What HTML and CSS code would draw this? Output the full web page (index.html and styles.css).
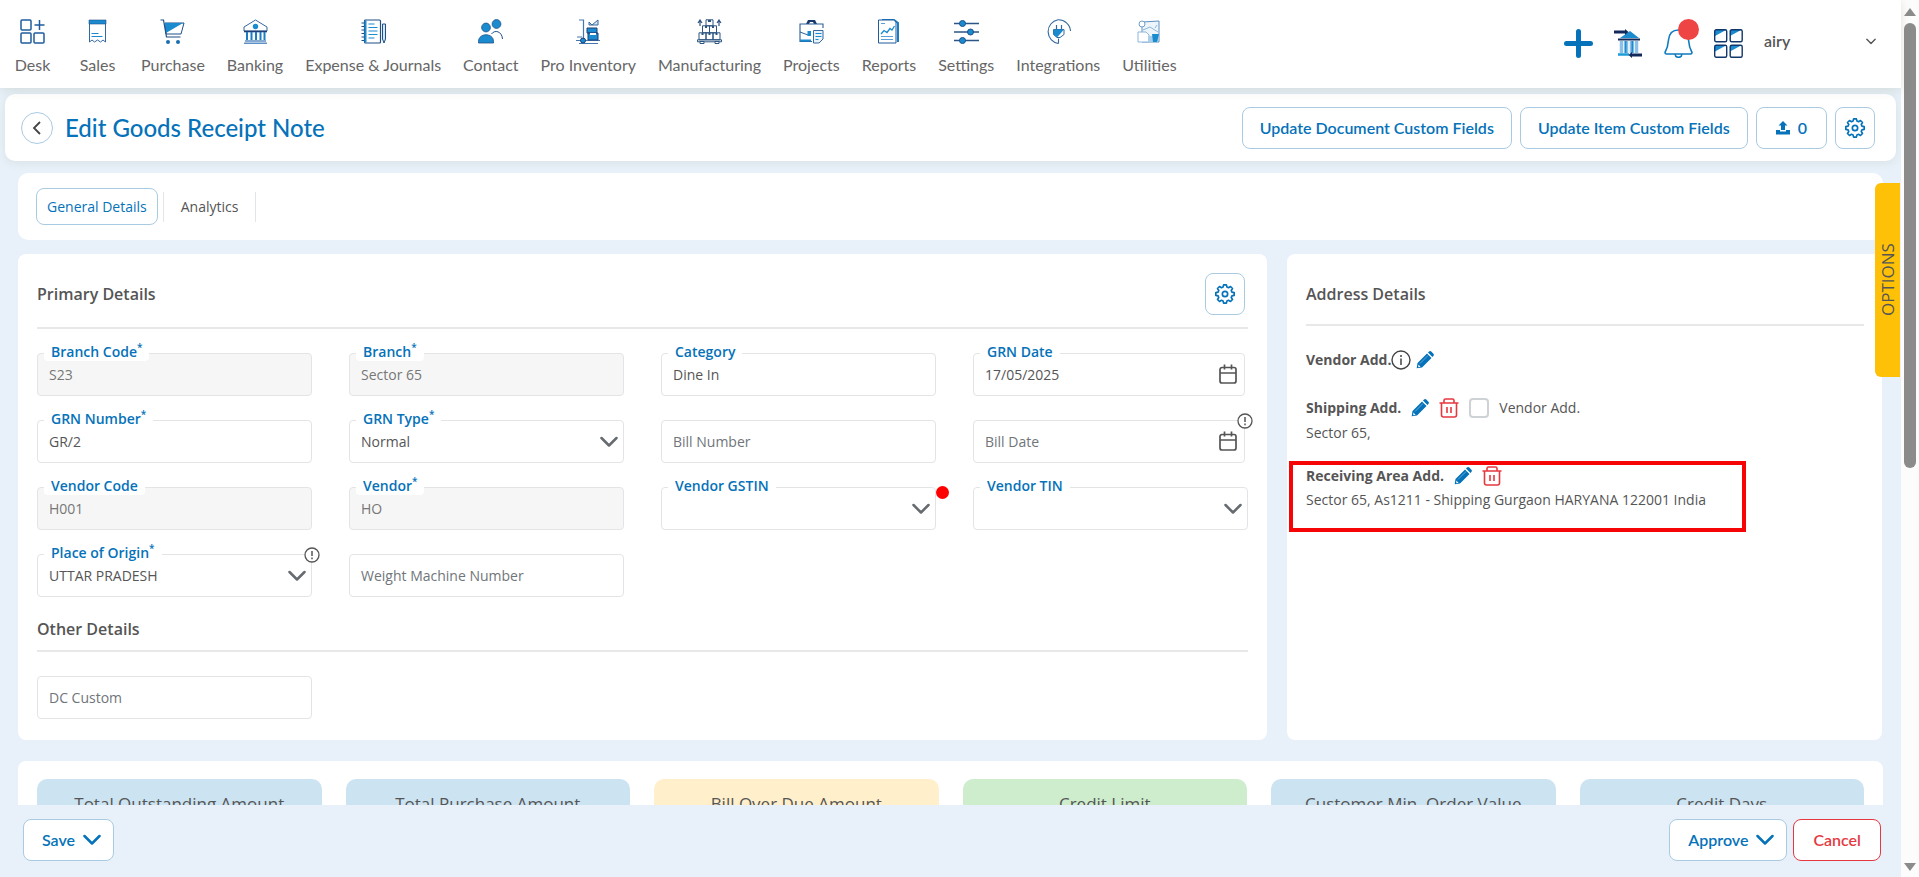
FILE: index.html
```
<!DOCTYPE html>
<html lang="en">
<head>
    <meta charset="utf-8">
    <title>Edit Goods Receipt Note</title>
    <link rel="stylesheet" href="styles.css">
</head>
<body>
<!-- shared icons -->
<svg class="defs" aria-hidden="true">
    <symbol id="gear" viewBox="0 0 24 24"><path d="M10.3 2.6h3.4l.6 2.7 1.9.8 2.4-1.5 2.4 2.4-1.5 2.4.8 1.9 2.7.6v3.4l-2.7.6-.8 1.9 1.5 2.4-2.4 2.4-2.4-1.5-1.9.8-.6 2.7h-3.4l-.6-2.7-1.9-.8-2.4 1.5L3 20.2l1.500-2.400-.8-1.900-2.700-.6v-3.400l2.700-.6.8-1.900L3 7l2.400-2.400 2.400 1.500 1.900-.8z" transform="translate(0 -1.600)" fill="none" stroke="currentColor" stroke-width="2" stroke-linejoin="round"/><circle cx="12" cy="12" r="3.200" fill="none" stroke="currentColor" stroke-width="2"/></symbol>
    <symbol id="chevron" viewBox="0 0 18 12"><path d="M1.500 2l7.500 7.500L16.500 2" fill="none" stroke="currentColor" stroke-width="2.500" stroke-linecap="round" stroke-linejoin="round"/></symbol>
    <symbol id="calendar" viewBox="0 0 18 20"><path d="M3 3.500h12a2 2 0 0 1 2 2V17a2 2 0 0 1-2 2H3a2 2 0 0 1-2-2V5.500a2 2 0 0 1 2-2zM1 9h16M5.500 0.500v5M12.500 0.500v5" fill="none" stroke="currentColor" stroke-width="1.700"/></symbol>
    <symbol id="alert" viewBox="0 0 16 16"><circle cx="8" cy="8" r="7" fill="#fff" stroke="currentColor" stroke-width="1.300"/><path d="M8 4v5M8 10.500v1.700" stroke="currentColor" stroke-width="1.500"/></symbol>
    <symbol id="pencil" viewBox="0 0 18 18"><path d="M1.500 12L11 2.500 15.500 7 6 16.500l-5.300.8zM12 1.600l1-1c.7-.7 1.600-.7 2.300 0l2.100 2.100c.7.7.7 1.600 0 2.300l-1 1z" fill="#0572b9"/><path d="M4 12.500l8-8" stroke="#5fa8d8" stroke-width="1"/><path d="M2.300 13.500l2.300 2.300-2.300.5z" fill="#fff"/></symbol>
    <symbol id="trash" viewBox="0 0 20 20"><path d="M.5 5h19M5 5V2.500A1.500 1.500 0 0 1 6.500 1h7A1.500 1.500 0 0 1 15 2.500V5M2.500 5v12A2 2 0 0 0 4.500 19h11a2 2 0 0 0 2-2V5M8 9v6M12 9v6" fill="none" stroke="#e5393f" stroke-width="1.600"/></symbol>
</svg>

<div class="window">
    <div class="page">
        <header class="topbar">
            <nav class="menu">
                <a href="#" class="menu-item"><svg viewBox="0 0 25 25"><g fill="none" stroke="#1f5c9c" stroke-width="1.500"><rect x="1" y="1" width="10" height="10" rx="1"/><rect x="1" y="14" width="10" height="10" rx="1"/><rect x="14" y="14" width="10" height="10" rx="1"/><path d="M19.500 1v10M14.500 6h10"/></g></svg>Desk</a>
                <a href="#" class="menu-item"><svg viewBox="0 0 25 25"><path d="M4.500 5V23l2.500-2 2.500 2 3-2 3 2 2.500-2 2.500 2V5" fill="#fff" stroke="#33699f" stroke-width="1"/><path d="M4 1h17v4H4z" fill="#1b8bd0" stroke="#1f4f86" stroke-width=".6"/><path d="M6.500 14.500h7M6.500 17.500h11" stroke="#1b8bd0"/></svg>Sales</a>
                <a href="#" class="menu-item"><svg viewBox="0 0 25 25"><path d="M5 4h19l-3 11H6z" fill="#fff" stroke="#1f4f86"/><path d="M5 4h18L6 14z" fill="#1b8bd0"/><path d="M.5 1h3l3 17h14" fill="none" stroke="#1f4f86" stroke-width="1.200"/><circle cx="8" cy="23" r="2" fill="#1b6eb0"/><circle cx="18" cy="23" r="2" fill="#1b6eb0"/></svg>Purchase</a>
                <a href="#" class="menu-item"><svg viewBox="0 0 25 25"><path d="M1 12V8L12.500 1 24 8v4z" fill="#fff" stroke="#33699f"/><path d="M1 12.500h23" stroke="#1f3f76" stroke-width="1.600"/><circle cx="12.500" cy="7.500" r="2.700" fill="#1b8bd0"/><path d="M4 13v8M8.500 13v8M13 13v8M17.500 13v8M21.500 13v8" stroke="#1b7cc4" stroke-width="2"/><path d="M2 22h21M1 24.300h23" stroke="#5d90c4" stroke-width="1.500"/></svg>Banking</a>
                <a href="#" class="menu-item"><svg viewBox="0 0 25 25"><rect x="3.500" y="1" width="16" height="23" rx="1" fill="#fff" stroke="#1f4f86" stroke-width="1.200"/><path d="M.5 4H5M.5 7.500H5M.5 11H5M.5 14.500H5M.5 18H5M.5 21.500H5" stroke="#1f4f86"/><path d="M4.500 1.500v22" stroke="#1b8bd0" stroke-width="2"/><path d="M7.500 5h6M7.500 8.500h9M7.500 12h9M7.500 15.500h9M7.500 19h6" stroke="#1b8bd0" stroke-width="1.100"/><path d="M21.500 5h3v15l-1.500 4-1.500-4z" fill="#d5e6f4" stroke="#1f4f86"/></svg>Expense &amp; Journals</a>
                <a href="#" class="menu-item"><svg viewBox="0 0 25 25"><path d="M.5 24v-1.500c0-9 15-9 15 0V24z" fill="#1b8bd0" stroke="#1f4f86" stroke-width=".8"/><circle cx="8" cy="8.500" r="4.400" fill="#1b8bd0" stroke="#1f4f86" stroke-width=".8"/><circle cx="18.500" cy="5" r="4.400" fill="#1b8bd0" stroke="#1f4f86" stroke-width=".8"/><path d="M13.500 15c3-4.500 10.500-3 11 5" fill="none" stroke="#1f4f86"/></svg>Contact</a>
                <a href="#" class="menu-item"><svg viewBox="0 0 25 25"><path d="M3 1h4.500v19M1 18h5M0 21.500h5M3 24.500h19M7 21.500h17" fill="none" stroke="#4579ae" stroke-width="1.200"/><path d="M12 14h10v7H12zM11 9h10v5H11z" fill="#1b8bd0" stroke="#1f3f76"/><path d="M13 3l3 3 6-5v5h-9z" fill="#d5e6f4" stroke="#33699f"/><path d="M14 14h6v2h-6z" fill="#fff"/><circle cx="7" cy="21.500" r="2.500" fill="#1b8bd0" stroke="#1f3f76"/></svg>Pro Inventory</a>
                <a href="#" class="menu-item"><svg viewBox="0 0 25 25"><path d="M9 .8h7v6H9zM5.500 6.800h7v7h-7zM12.500 6.800h7v7h-7zM2 13.800h7v7H2zM9 13.800h7v7H9zM16 13.800h7v7h-7zM.5 20.800h24v2H.5z" fill="#fff" stroke="#2d5480"/><path d="M11 1h3v2h-3zM8 7h2v2H8zM15 7h2v2h-2zM4.500 14h2v2h-2zM11.500 14h2v2h-2zM18.500 14h2v2h-2z" fill="#2d5480"/><path d="M3 7V2M1 4l2-3 2 3M22 7V2M20 4l2-3 2 3" fill="none" stroke="#2d5480" stroke-width="1.200"/><path d="M3 22.500h4v2H3zM18 22.500h4v2h-4z" fill="#fff" stroke="#2d5480"/></svg>Manufacturing</a>
                <a href="#" class="menu-item"><svg viewBox="0 0 25 25"><path d="M7 5l2-4h7l2 4h-3l-1-2h-3l-1 2z" fill="#16386a"/><path d="M24 9V5H1v17.500h12" fill="none" stroke="#2d5f94" stroke-width="1.100"/><path d="M1 13l8 3" stroke="#2d5f94"/><path d="M1 20.500h11v2H1zM8.500 12H12v5H8.500z" fill="#1b8bd0"/><path d="M14.500 11.500H24V20l-4 4h-5.500z" fill="#eaf3fa" stroke="#33699f"/><path d="M16.500 14.500h6M16.500 17.500h6M16.500 20.500h3" stroke="#1b8bd0"/></svg>Projects</a>
                <a href="#" class="menu-item"><svg viewBox="0 0 25 25"><path d="M6 1h12l4 3v19" fill="none" stroke="#1b7cc4" stroke-width="2"/><path d="M2.500 1h15l2.500 2v21h-17.500z" fill="#fff" stroke="#1f5c9c"/><path d="M5 15l3-3.500 3 2 3-4 2 1.500 2.500-4" fill="none" stroke="#1b8bd0" stroke-width="1.300"/><path d="M5 17.500h12M5 20.500h12M5 4.500h4" stroke="#5d9fd4"/></svg>Reports</a>
                <a href="#" class="menu-item"><svg viewBox="0 0 25 25"><path d="M0 4.500h25M0 13h25M0 21.500h25" stroke="#2c5587" stroke-width="1.300"/><g fill="#1b8bd0" stroke="#1f4f86"><circle cx="8.500" cy="4.500" r="3"/><circle cx="16.500" cy="13" r="3"/><circle cx="8.500" cy="21.500" r="3"/></g></svg>Settings</a>
                <a href="#" class="menu-item"><svg viewBox="0 0 25 25"><path d="M12.500 24.500v-5M12.500 24.500A12 12 0 0 1 12 .8 12 12 0 0 1 24.500 12" fill="none" stroke="#33699f" stroke-width="1.100"/><path d="M10.500 6v5M15.500 6v5" stroke="#33699f" stroke-width="1.200"/><path d="M7.500 10.500h10.500v5l-4 3h-3L7.500 15.500z" fill="#fff" stroke="#33699f"/><path d="M7.500 10.500H18l-7 8-3.500-3z" fill="#1b8bd0"/></svg>Integrations</a>
                <a href="#" class="menu-item"><svg viewBox="0 0 25 25"><path d="M5 3l17-1v21H5z" fill="#edf4fa" stroke="#5d90c4"/><circle cx="5" cy="5" r="3" fill="#fff" stroke="#6f9fcb"/><path d="M6 11l7-3 8 5M20 6l-2 3" fill="none" stroke="#8db6dc"/><path d="M1 13h8l3 3v7H1z" fill="#fff" stroke="#8db6dc"/><path d="M11 17h10v6H11z" fill="#a7cfec"/><path d="M15 15h7l-2 8h-4z" fill="#1b8bd0"/></svg>Utilities</a>
            </nav>
            <div class="tools">
                <button class="tool" aria-label="Add"><svg viewBox="0 0 29 29"><path d="M14.500 2.500v24M2.500 14.500h24" stroke="#0572b9" stroke-width="5" stroke-linecap="round"/></svg></button>
                <button class="tool" aria-label="Bank"><svg viewBox="0 0 29 29"><path d="M16 2l9 7H6z" fill="#1b8bd0"/><path d="M4 10.500h22" stroke="#12295c" stroke-width="2"/><path d="M7.500 12v12M12.500 12v12M17.500 12v12M22.500 12v12" stroke="#8cc0e6" stroke-width="3.500"/><path d="M11.500 12v12M18.500 12v12" stroke="#1b8bd0" stroke-width="2"/><path d="M4 25.500h11" stroke="#1b9bd8" stroke-width="2.500"/><path d="M0 1.500h11V0l3.500 3-3.500 3V4.500H0zM28 24.500H18V23l-3.500 3 3.500 3v-1.500h10z" fill="#12295c"/></svg></button>
                <button class="tool bell" aria-label="Notifications"><svg viewBox="0 0 29 29"><path d="M14.500 1C8 1 5 5.500 4.500 11c-.3 4-1 8-3.500 12.500 0 1 .5 1.500 1.500 1.500h24c1 0 1.500-.5 1.500-1.500C25.500 19 24.800 15 24.500 11 24 5.500 21 1 14.500 1z" fill="none" stroke="#0e7bbf" stroke-width="1.600"/><path d="M11 25c.5 4.500 6.500 4.500 7 0" fill="none" stroke="#0e7bbf" stroke-width="1.600"/></svg><span class="badge"></span></button>
                <button class="tool" aria-label="Apps"><svg viewBox="0 0 29 29"><path d="M1 1h11L1 7zM16 1h11l-11 6zM1 16.500h11L1 22.500zM16 16.500h11l-11 6z" fill="#1b8bd0"/><g fill="none" stroke="#12376a" stroke-width="1.400"><rect x=".7" y=".7" width="12" height="12" rx="1.500"/><rect x="16.200" y=".7" width="12" height="12" rx="1.500"/><rect x=".7" y="16.200" width="12" height="12" rx="1.500"/><rect x="16.200" y="16.200" width="12" height="12" rx="1.500"/></g></svg></button>
                <button class="user">airy<svg viewBox="0 0 18 12"><use href="#chevron"/></svg></button>
            </div>
        </header>

        <main class="content">
            <section class="titlebar">
                <button class="back" aria-label="Back"><svg viewBox="0 0 10 16"><path d="M8 2L2 8l6 6" fill="none" stroke="#444" stroke-width="1.800"/></svg></button>
                <h1>Edit Goods Receipt Note</h1>
                <button class="btn">Update Document Custom Fields</button>
                <button class="btn">Update Item Custom Fields</button>
                <button class="btn upload"><svg viewBox="0 0 14 14"><path d="M7 0l4.500 4.500H9V9H5V4.500H2.500zM0 9h4v1.500h6V9h4v4.500H0z" fill="currentColor"/></svg>0</button>
                <button class="btn icon-btn" aria-label="Settings"><svg><use href="#gear"/></svg></button>
            </section>

            <section class="tabs">
                <button class="tab active">General Details</button>
                <button class="tab">Analytics</button>
            </section>

            <div class="columns">
                <section class="card primary">
                    <div class="card-head">
                        <h2>Primary Details</h2>
                        <button class="btn icon-btn" aria-label="Field settings"><svg><use href="#gear"/></svg></button>
                    </div>
                    <div class="fields">
                        <div class="field"><input id="branchCode" value="S23" disabled><label for="branchCode">Branch Code<sup>*</sup></label></div>
                        <div class="field"><input id="branch" value="Sector 65" disabled><label for="branch">Branch<sup>*</sup></label></div>
                        <div class="field"><input id="category" value="Dine In"><label for="category">Category</label></div>
                        <div class="field date"><input id="grnDate" value="17/05/2025"><label for="grnDate">GRN Date</label><svg class="cal"><use href="#calendar"/></svg></div>

                        <div class="field"><input id="grnNumber" value="GR/2"><label for="grnNumber">GRN Number<sup>*</sup></label></div>
                        <div class="field"><select id="grnType"><option>Normal</option></select><label for="grnType">GRN Type<sup>*</sup></label><svg class="arrow"><use href="#chevron"/></svg></div>
                        <div class="field"><input placeholder="Bill Number" aria-label="Bill Number"></div>
                        <div class="field date"><input placeholder="Bill Date" aria-label="Bill Date"><svg class="cal"><use href="#calendar"/></svg><svg class="alert"><use href="#alert"/></svg></div>

                        <div class="field"><input id="vendorCode" value="H001" disabled><label for="vendorCode">Vendor Code</label></div>
                        <div class="field"><input id="vendor" value="HO" disabled><label for="vendor">Vendor<sup>*</sup></label></div>
                        <div class="field"><select id="gstin"><option></option></select><label for="gstin">Vendor GSTIN</label><svg class="arrow"><use href="#chevron"/></svg><span class="dot"></span></div>
                        <div class="field"><select id="tin"><option></option></select><label for="tin">Vendor TIN</label><svg class="arrow"><use href="#chevron"/></svg></div>

                        <div class="field"><select id="origin"><option>UTTAR PRADESH</option></select><label for="origin">Place of Origin<sup>*</sup></label><svg class="arrow"><use href="#chevron"/></svg><svg class="alert"><use href="#alert"/></svg></div>
                        <div class="field"><input placeholder="Weight Machine Number" aria-label="Weight Machine Number"></div>
                    </div>
                    <h2 class="sub-head">Other Details</h2>
                    <div class="fields">
                        <div class="field"><input placeholder="DC Custom" aria-label="DC Custom"></div>
                    </div>
                </section>

                <section class="card address">
                    <h2>Address Details</h2>
                    <div class="addr">
                        <div class="addr-row tight"><b>Vendor Add.</b><svg class="info" viewBox="0 0 20 20"><circle cx="10" cy="10" r="9" fill="none" stroke="#444" stroke-width="1.400"/><path d="M10 5v2M10 8.500V15" stroke="#444" stroke-width="1.500"/></svg><button class="act" aria-label="Edit vendor address"><svg class="pencil"><use href="#pencil"/></svg></button></div>
                    </div>
                    <div class="addr">
                        <div class="addr-row"><b>Shipping Add.</b><button class="act" aria-label="Edit shipping address"><svg class="pencil"><use href="#pencil"/></svg></button><button class="act" aria-label="Delete shipping address"><svg class="trash"><use href="#trash"/></svg></button><input type="checkbox" id="sameVendor"><label for="sameVendor">Vendor Add.</label></div>
                        <p>Sector 65,</p>
                    </div>
                    <div class="addr marked">
                        <div class="addr-row"><b>Receiving Area Add.</b><button class="act" aria-label="Edit receiving address"><svg class="pencil"><use href="#pencil"/></svg></button><button class="act" aria-label="Delete receiving address"><svg class="trash"><use href="#trash"/></svg></button></div>
                        <p>Sector 65, As1211 - Shipping Gurgaon HARYANA 122001 India</p>
                    </div>
                </section>
            </div>

            <section class="card tiles">
                <div class="tile">Total Outstanding Amount</div>
                <div class="tile">Total Purchase Amount</div>
                <div class="tile yellow">Bill Over Due Amount</div>
                <div class="tile green">Credit Limit</div>
                <div class="tile">Customer Min. Order Value</div>
                <div class="tile">Credit Days</div>
            </section>
        </main>

        <footer class="actions">
            <button class="btn save">Save<svg><use href="#chevron"/></svg></button>
            <button class="btn approve">Approve<svg><use href="#chevron"/></svg></button>
            <button class="btn cancel">Cancel</button>
        </footer>

        <button class="options">OPTIONS</button>
    </div>

    <div class="scrollbar">
        <svg viewBox="0 0 12 8"><path d="M6 0l6 8H0z" fill="#8b8b8b"/></svg>
        <div class="track"><div class="thumb"></div></div>
        <svg viewBox="0 0 12 8"><path d="M6 8l6-8H0z" fill="#8b8b8b"/></svg>
    </div>
</div>
</body>
</html>
```
FILE: styles.css
```
* {
    box-sizing: border-box;
}
body {
    margin: 0;
    background: #e8f1f9;
    color: #555;
    font: 14px/20px "Open Sans", "Noto Sans", sans-serif;
}
button, input, select {
    font: inherit;
    color: inherit;
}
button {
    padding: 0;
    border: 0;
    background: none;
}
h1, h2, p {
    margin: 0;
}
svg {
    display: block;
    flex: none;
}
.defs {
    position: absolute;
    width: 0;
    height: 0;
}
.window {
    display: flex;
    height: 100vh;
    overflow: hidden;
}
.page {
    position: relative;
    flex: 1;
    min-width: 0;
    display: flex;
    flex-direction: column;
}

/* top menu */
.topbar {
    position: relative;
    z-index: 1;
    display: flex;
    justify-content: space-between;
    height: 88px;
    flex: none;
    background: #fff;
    box-shadow: 0 2px 10px rgba(110, 120, 90, 0.18);
    font-family: Lato, sans-serif;
}
.menu {
    display: flex;
    gap: 22px;
    padding: 19px 0 0 11px;
}
.menu-item {
    display: flex;
    flex-direction: column;
    align-items: center;
    gap: 11px;
    min-width: 43px;
    color: #666;
    font-size: 16px;
    text-decoration: none;
    white-space: nowrap;
}
.menu-item svg {
    width: 25px;
    height: 25px;
}
.tools {
    display: flex;
    align-items: flex-start;
    gap: 21px;
    padding: 29px 25px 0 0;
}
.tool {
    position: relative;
}
.tool svg {
    width: 29px;
    height: 29px;
}
.badge {
    position: absolute;
    top: -10px;
    right: -6px;
    width: 21px;
    height: 21px;
    border-radius: 50%;
    background: #ef4444;
}
.user {
    display: flex;
    justify-content: space-between;
    align-items: center;
    width: 112px;
    margin-top: 2px;
    font-size: 16px;
    font-weight: 600;
}
.user svg {
    width: 10px;
    height: 7px;
}

/* page title */
.content {
    flex: 1;
    min-height: 0;
    overflow: hidden;
    padding: 6px 18px 0;
}
.titlebar {
    display: flex;
    align-items: center;
    gap: 8px;
    height: 67px;
    margin: 0 -13px;
    padding: 0 21px 0 16px;
    border-radius: 10px;
    background: #fff;
    box-shadow: 0 2px 10px rgba(110, 120, 90, 0.12);
    font-family: Lato, sans-serif;
}
.back {
    display: flex;
    align-items: center;
    justify-content: center;
    width: 32px;
    height: 32px;
    border: 1px solid #a9cbe2;
    border-radius: 50%;
}
.back svg {
    width: 10px;
    height: 16px;
}
h1 {
    flex: 1;
    padding-left: 4px;
    color: #0572b9;
    font-size: 24px;
    line-height: 30px;
    font-weight: 500;
}
.btn {
    display: flex;
    align-items: center;
    justify-content: center;
    gap: 8px;
    height: 42px;
    padding: 0 17px;
    border: 1px solid #a9cbe2;
    border-radius: 8px;
    background: #fff;
    color: #0572b9;
    font-family: Lato, sans-serif;
    font-size: 16px;
    font-weight: 600;
}
.upload {
    padding: 0 19px;
}
.upload svg {
    width: 14px;
    height: 14px;
}
.icon-btn {
    width: 40px;
    padding: 0;
}
.icon-btn svg {
    width: 20px;
    height: 20px;
}

/* tabs */
.tabs {
    display: flex;
    align-items: center;
    height: 67px;
    margin-top: 12px;
    padding: 0 18px;
    border-radius: 10px;
    background: #fff;
}
.tab {
    height: 30px;
    padding: 0 17px;
    border-right: 1px solid #e3e6e8;
}
.tab.active {
    height: 37px;
    margin-right: 5px;
    padding: 0 10px;
    border: 1px solid #a9cbe2;
    border-radius: 8px;
    color: #0572b9;
}
.tab.active + .tab {
    border-left: 1px solid #e3e6e8;
}

/* cards */
.columns {
    display: grid;
    grid-template-columns: 1249fr 595fr;
    gap: 20px;
    margin: 14px 1px 0 0;
}
.card {
    border-radius: 8px;
    background: #fff;
}
.primary {
    padding: 19px 19px 21px;
}
h2 {
    font-size: 16px;
    line-height: 24px;
    font-weight: 600;
}
.card-head {
    display: flex;
    justify-content: space-between;
    align-items: center;
    padding: 0 3px 12px 0;
    border-bottom: 2px solid #e6e8e9;
}
.fields {
    display: grid;
    grid-template-columns: repeat(4, 1fr);
    gap: 24px 37px;
    margin-top: 24px;
}
.field {
    position: relative;
    height: 43px;
}
.field.date {
    margin-right: 3px;
}
.field input, .field select {
    width: 100%;
    height: 100%;
    padding: 0 11px;
    border: 1px solid #e3e4e6;
    border-radius: 4px;
    background: #fff;
    appearance: none;
}
.field input:disabled {
    background: #f6f6f6;
    color: #777;
}
.field input::placeholder {
    color: #70757a;
    opacity: 1;
}
.field label {
    position: absolute;
    top: -10px;
    left: 7px;
    padding: 0 7px;
    border-radius: 4px;
    background: #fff;
    color: #0572b9;
    font-size: 14px;
    line-height: 18px;
    font-weight: 600;
}
.field sup {
    font-size: 10px;
    line-height: 0;
}
.arrow {
    position: absolute;
    top: 16px;
    right: 6px;
    width: 18px;
    height: 12px;
    color: #666b70;
    pointer-events: none;
}
.cal {
    position: absolute;
    top: 11px;
    right: 8px;
    width: 18px;
    height: 20px;
}
.alert {
    position: absolute;
    top: -7px;
    right: -8px;
    width: 16px;
    height: 16px;
}
.dot {
    position: absolute;
    top: -1px;
    right: -13px;
    width: 13px;
    height: 13px;
    border-radius: 50%;
    background: #f00;
}
.sub-head {
    margin-top: 20px;
    padding-bottom: 9px;
    border-bottom: 2px solid #e6e8e9;
}

/* address */
.address {
    padding: 28px 18px 0 19px;
}
.address h2 {
    padding-bottom: 18px;
    border-bottom: 2px solid #e6e8e9;
}
.addr {
    margin-top: 22px;
}
.addr-row {
    display: flex;
    align-items: center;
    gap: 10px;
    height: 24px;
}
.addr-row.tight {
    gap: 0;
    margin-bottom: 24px;
}
.addr-row b {
    font-weight: 700;
}
.info {
    width: 20px;
    height: 20px;
    margin-right: 5px;
}
.pencil {
    width: 18px;
    height: 18px;
}
.trash {
    width: 20px;
    height: 20px;
}
.addr-row input {
    width: 20px;
    height: 20px;
    margin: 0;
    border: 2px solid #ced2d5;
    border-radius: 4px;
    appearance: none;
}
.addr p {
    padding-top: 3px;
}
.marked {
    width: 457px;
    height: 71px;
    margin: 18px 0 0 -17px;
    padding: 0 13px;
    border: 4px solid #f50505;
}
.marked .addr-row {
    height: 22px;
}

/* totals */
.tiles {
    display: grid;
    grid-template-columns: repeat(6, 1fr);
    gap: 24px;
    margin-top: 21px;
    padding: 18px 19px;
}
.tile {
    height: 90px;
    padding-top: 13px;
    border-radius: 10px;
    background: #cce3f1;
    font-size: 17px;
    line-height: 24px;
    text-align: center;
}
.tile.yellow {
    background: #fff0cb;
}
.tile.green {
    background: #cdedcd;
}

/* bottom bar */
.actions {
    display: flex;
    align-items: center;
    gap: 6px;
    height: 72px;
    flex: none;
    padding: 0 20px 2px 23px;
    background: #e8f1f9;
}
.actions svg {
    width: 18px;
    height: 12px;
}
.save {
    margin-right: auto;
    padding: 0 12px 0 18px;
}
.approve {
    padding: 0 12px 0 18px;
}
.cancel {
    padding: 0 19px;
    border-color: #e5393f;
    color: #e5393f;
}
.options {
    position: absolute;
    z-index: 2;
    top: 183px;
    right: 1px;
    width: 25px;
    height: 194px;
    border-radius: 0 6px 6px 0;
    background: #ffc107;
    color: #555;
    font-size: 17px;
    line-height: 24px;
    writing-mode: vertical-rl;
    transform: rotate(180deg);
}

/* scrollbar */
.scrollbar {
    display: flex;
    flex-direction: column;
    align-items: center;
    width: 18px;
    padding: 8px 0 6px;
    background: #fcfcfc;
}
.scrollbar svg {
    width: 12px;
    height: 8px;
}
.track {
    flex: 1;
    padding-top: 7px;
}
.thumb {
    width: 12px;
    height: 53%;
    border-radius: 6px;
    background: #8b8b8b;
}
```
